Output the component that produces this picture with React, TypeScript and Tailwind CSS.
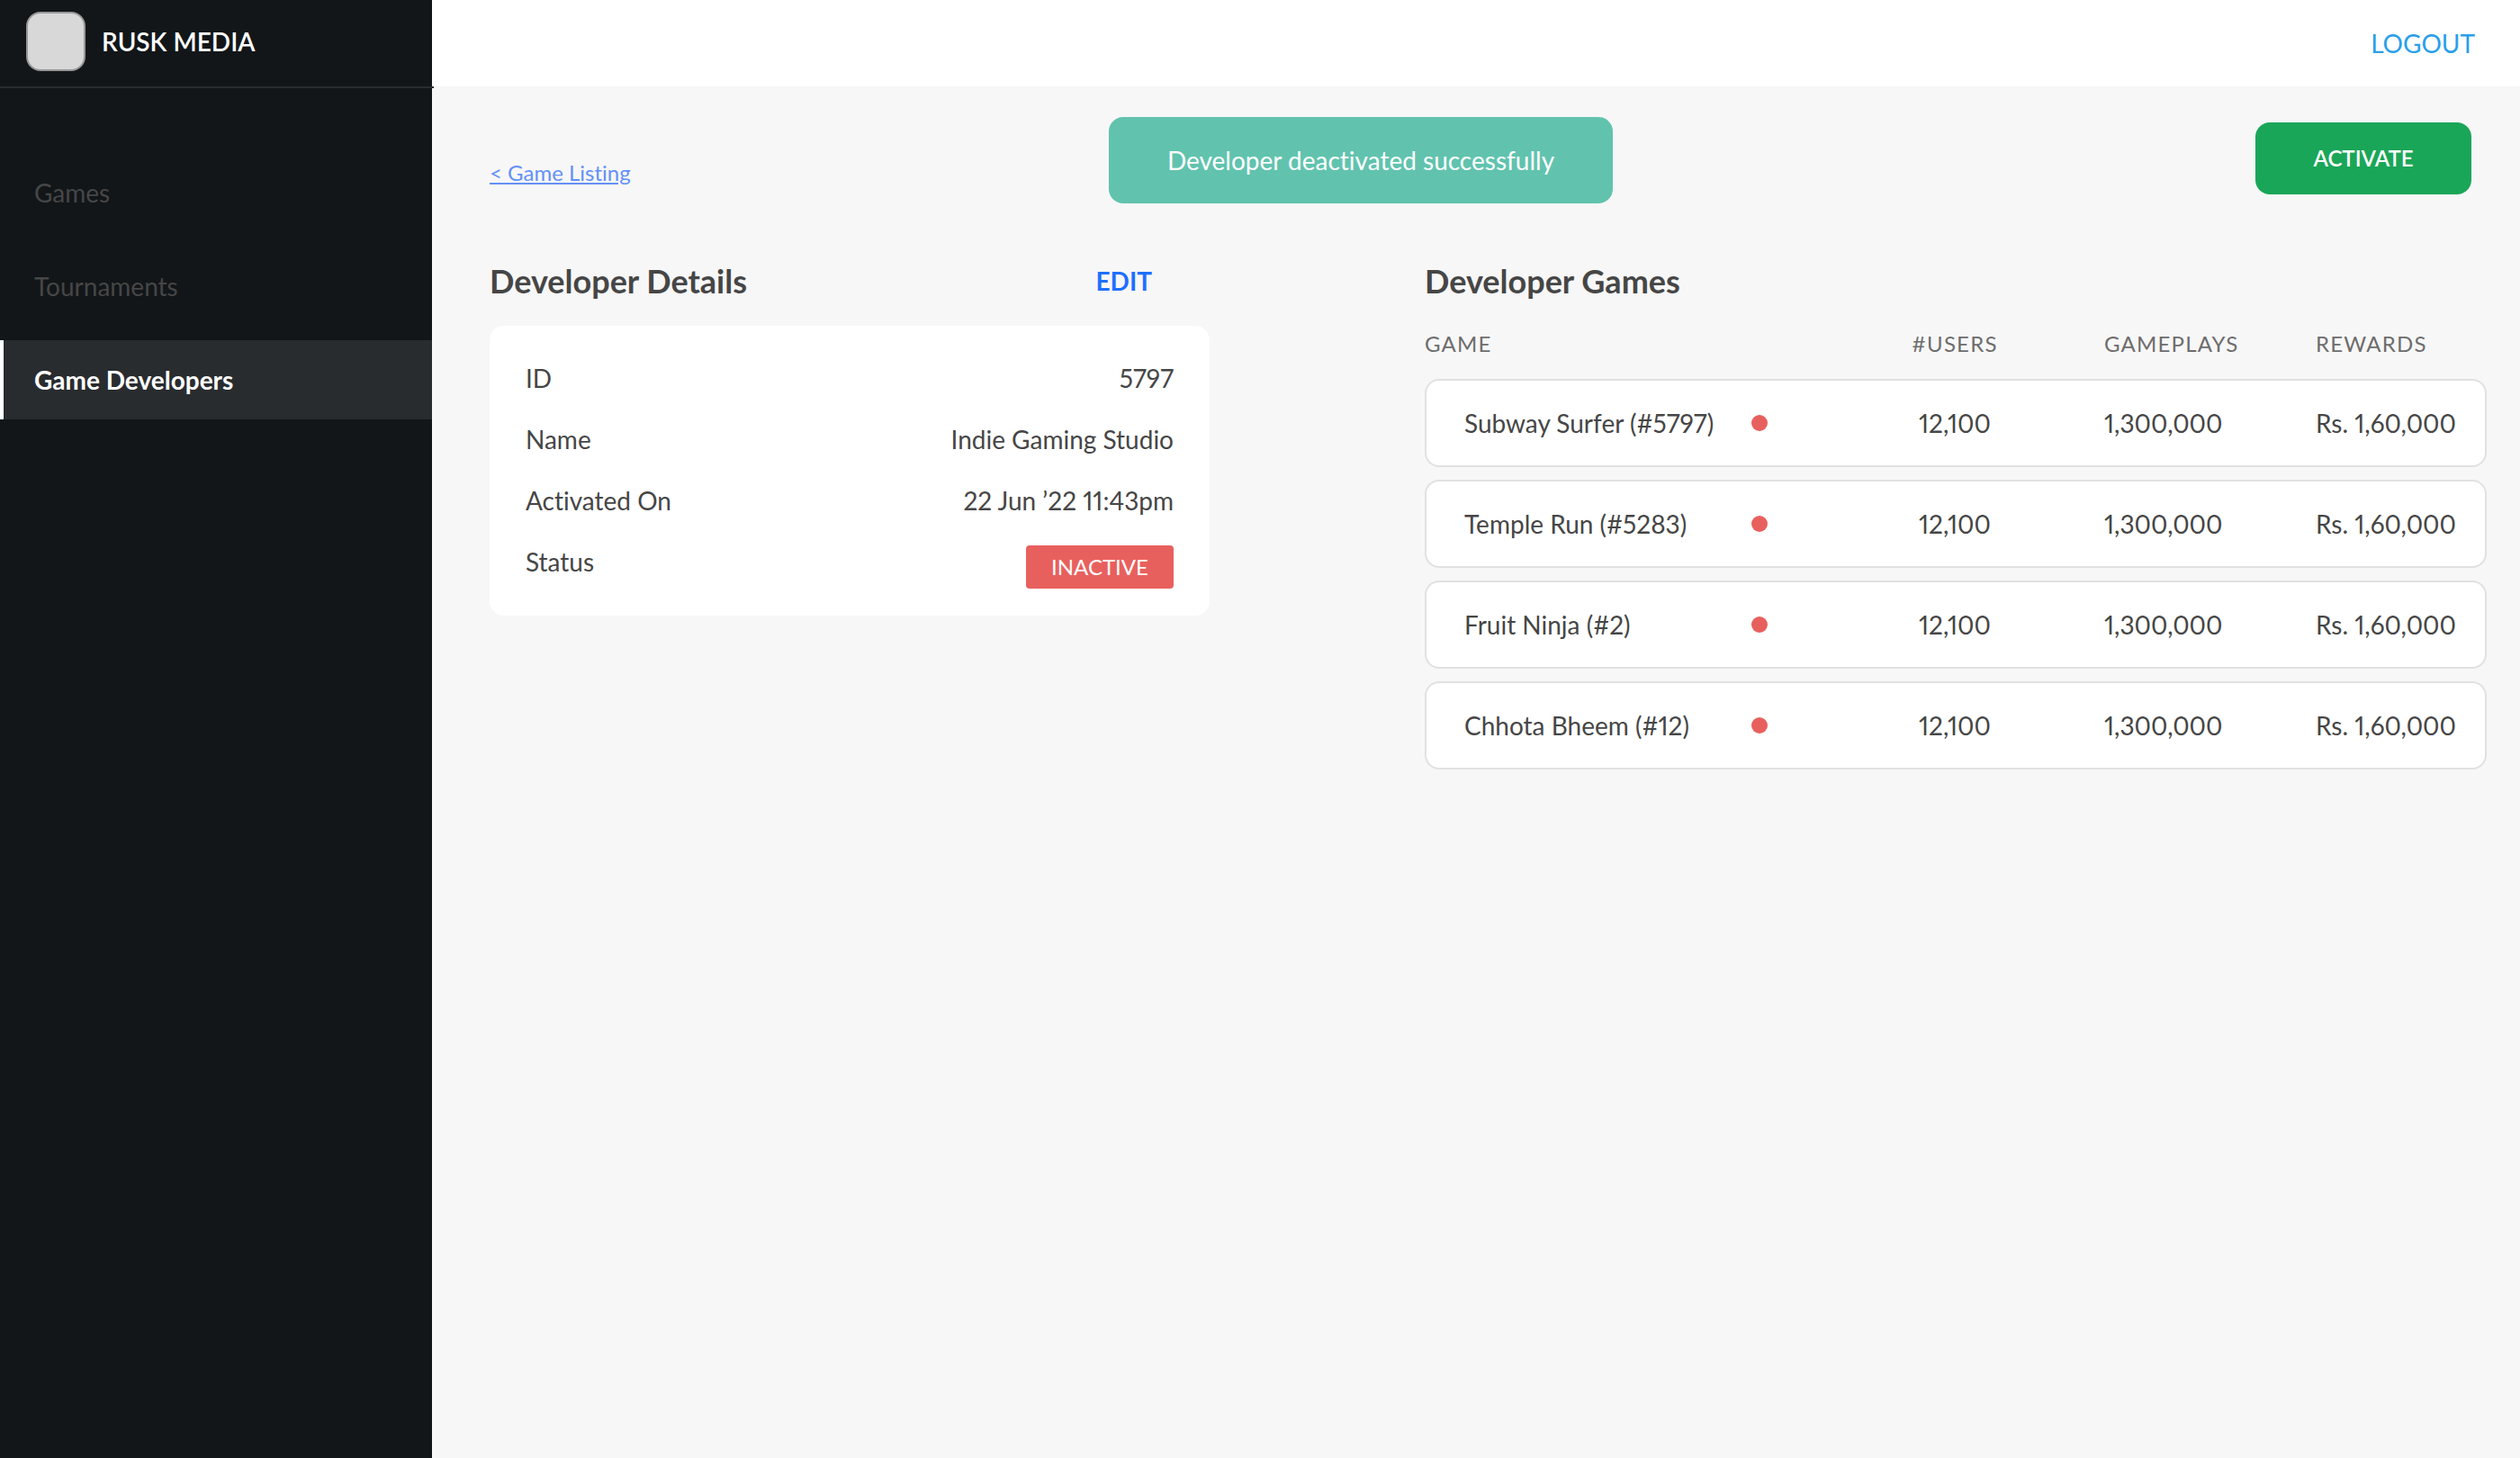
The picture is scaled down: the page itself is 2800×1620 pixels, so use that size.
const navItems = [
  { label: "Games", active: false },
  { label: "Tournaments", active: false },
  { label: "Game Developers", active: true },
];

const details = [
  { label: "ID", value: "5797" },
  { label: "Name", value: "Indie Gaming Studio" },
  { label: "Activated On", value: "22 Jun ’22 11:43pm" },
];

const games = [
  "Subway Surfer (#5797)",
  "Temple Run (#5283)",
  "Fruit Ninja (#2)",
  "Chhota Bheem (#12)",
].map((name) => ({
  name,
  users: "12,100",
  gameplays: "1,300,000",
  rewards: "Rs. 1,60,000",
}));

function Sidebar() {
  return (
    <aside className="w-[480px] shrink-0 bg-[#121619]">
      <div className="relative -mr-0.5 flex h-[98px] items-center gap-[18px] border-b-2 border-[#282c2f] pb-1 pl-[29px]">
        <div className="size-[66px] rounded-2xl border-2 border-[#979797] bg-[#d8d8d8]" />
        <span className="font-semibold text-white">RUSK MEDIA</span>
      </div>
      <nav className="mt-[72px] flex flex-col gap-4">
        {navItems.map((item) => (
          <a
            key={item.label}
            href="#"
            aria-current={item.active ? "page" : undefined}
            className={
              item.active
                ? "flex h-[88px] items-center border-l-4 border-white bg-[#292c2f] pl-[34px] font-bold text-white"
                : "flex h-[88px] items-center border-l-4 border-transparent pl-[34px] text-[#464646]"
            }
          >
            {item.label}
          </a>
        ))}
      </nav>
    </aside>
  );
}

function DetailsPanel() {
  return (
    <section>
      <div className="flex h-11 items-center justify-between pr-16">
        <h2 className="text-[36px] font-bold">Developer Details</h2>
        <button type="button" className="font-bold text-[#1f6fff]">
          EDIT
        </button>
      </div>
      <dl className="mt-7 flex flex-col gap-8 rounded-2xl bg-white px-10 pt-10 pb-[30px]">
        {details.map((row) => (
          <div key={row.label} className="flex h-9 items-center justify-between">
            <dt>{row.label}</dt>
            <dd>{row.value}</dd>
          </div>
        ))}
        <div className="flex items-start justify-between">
          <dt className="leading-9">Status</dt>
          <dd className="flex h-12 w-[164px] items-center justify-center rounded bg-[#e8605e] text-2xl text-white">
            INACTIVE
          </dd>
        </div>
      </dl>
    </section>
  );
}

function GamesPanel() {
  return (
    <section>
      <h2 className="flex h-11 items-center text-[36px] font-bold">Developer Games</h2>
      <table className="mt-2 w-full table-fixed border-separate border-spacing-x-0 border-spacing-y-[14px]">
        <colgroup>
          <col className="w-[363px]" />
          <col className="w-[60px]" />
          <col className="w-[332px]" />
          <col className="w-[235px]" />
          <col />
        </colgroup>
        <thead>
          <tr className="h-[51px] text-left text-2xl tracking-wider text-[#6d6d6d]">
            <th scope="col" colSpan={2} className="font-normal">GAME</th>
            <th scope="col" className="text-center font-normal">#USERS</th>
            <th scope="col" className="font-normal">GAMEPLAYS</th>
            <th scope="col" className="font-normal">REWARDS</th>
          </tr>
        </thead>
        <tbody>
          {games.map((game) => (
            <tr key={game.name} className="h-[98px]">
              <td className="rounded-l-2xl border-y-2 border-l-2 border-[#e1e1e1] bg-white pl-[42px]">
                {game.name}
              </td>
              <td className="border-y-2 border-[#e1e1e1] bg-white">
                <span role="img" aria-label="Inactive" className="block size-[18px] rounded-full bg-[#e8605e]" />
              </td>
              <td className="border-y-2 border-[#e1e1e1] bg-white text-center">{game.users}</td>
              <td className="border-y-2 border-[#e1e1e1] bg-white">{game.gameplays}</td>
              <td className="rounded-r-2xl border-y-2 border-r-2 border-[#e1e1e1] bg-white">
                {game.rewards}
              </td>
            </tr>
          ))}
        </tbody>
      </table>
    </section>
  );
}

export default function App() {
  return (
    <div className="relative flex min-h-screen bg-[#f7f7f7] font-['Lato','Open_Sans',sans-serif] text-[28px] leading-9 text-[#464646] proportional-nums [font-variant-ligatures:none]">
      <Sidebar />
      <div className="min-w-0 flex-1">
        <header className="flex h-24 items-center justify-end bg-white pr-[50px]">
          <button type="button" className="text-[#2a9fe8]">LOGOUT</button>
        </header>
        <main className="pr-[37px] pl-16">
          <div className="mt-10 flex h-20 items-start justify-between pr-[17px]">
            <a href="#" className="mt-10 text-2xl text-[#6391f7] underline underline-offset-2">
              &lt; Game Listing
            </a>
            <button
              type="button"
              className="h-20 w-60 rounded-2xl bg-[#1aa658] text-2xl font-semibold text-white"
            >
              ACTIVATE
            </button>
          </div>
          <div className="mt-[74px] grid grid-cols-[800fr_1180fr] items-start gap-[239px]">
            <DetailsPanel />
            <GamesPanel />
          </div>
        </main>
      </div>
      <div
        role="status"
        className="absolute top-[130px] left-[44%] flex h-24 w-[560px] items-center justify-center rounded-2xl bg-[#61c3ae] text-white"
      >
        Developer deactivated successfully
      </div>
    </div>
  );
}
